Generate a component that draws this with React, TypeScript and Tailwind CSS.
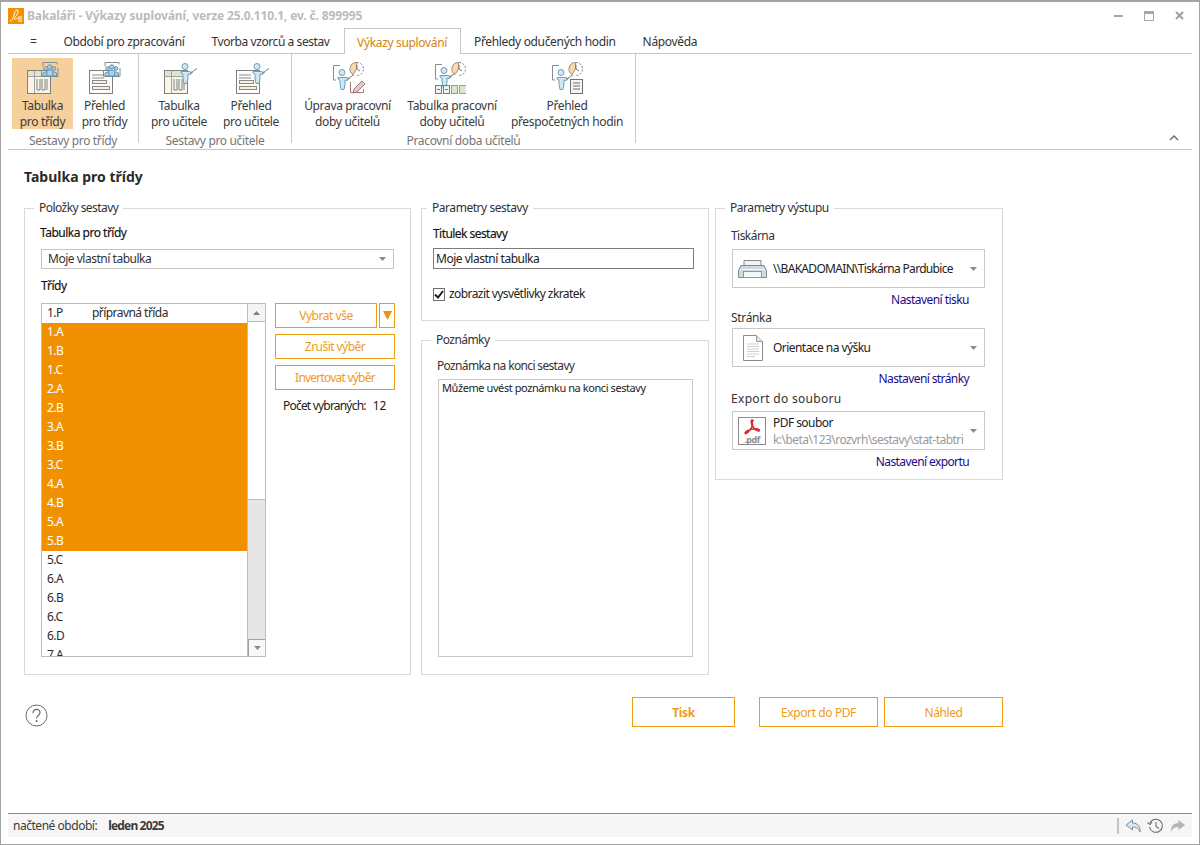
import React from "react";

const F = "[font-family:'Noto_Sans','Open_Sans',sans-serif]";

function People({ x = 0, y = 0 }: { x?: number; y?: number }) {
  return (
    <g transform={`translate(${x} ${y})`}>
      <path d="M2 4.500V.5h14v2M.5 8v6.500H17V6" fill="none" stroke="#8a8a8a" strokeWidth="1" />
      <g fill="#a9d3e8" stroke="#5f94b0" strokeWidth="1">
        <circle cx="4.500" cy="6.500" r="1.800" />
        <circle cx="13" cy="6.500" r="1.800" />
        <path d="M2 14v-3l2-1h1l2 1v3z" />
        <path d="M10.500 14v-3l2-1h1l2 1v3z" />
        <circle cx="8.750" cy="5" r="2.200" />
        <path d="M5.750 14v-5l2-1h2l2 1v5z" />
      </g>
    </g>
  );
}

function Teacher({ x = 0, y = 0 }: { x?: number; y?: number }) {
  return (
    <g transform={`translate(${x} ${y})`}>
      <g fill="#cfe8f4" stroke="#6ba0ba" strokeWidth="1">
        <circle cx="6" cy="3.500" r="3" />
        <path d="M2 8.500h8l3.500 1-2.500 2-2-.5v4l-1 5.500H5l-1-5.500v-4l-2-1z" />
      </g>
      <path d="M11 10.500l7-5" stroke="#7f7f7f" strokeWidth="1" />
    </g>
  );
}

function Clock({ x = 0, y = 0 }: { x?: number; y?: number }) {
  return (
    <g transform={`translate(${x} ${y})`}>
      <path d="M6.500 .5a6.500 6.500 0 0 0-3.500 12L6.500 7z" fill="#f6d9ae" stroke="#a08b72" />
      <path d="M7 .5a6.500 6.500 0 0 1 0 13" fill="none" stroke="#7a7a7a" strokeDasharray="2 1.500" />
      <path d="M7 3v4l3 2" fill="none" stroke="#7a7a7a" />
    </g>
  );
}

function TableIcon({ x = 0, y = 0, w = 24 }: { x?: number; y?: number; w?: number }) {
  return (
    <g transform={`translate(${x} ${y})`}>
      <rect x=".5" y=".5" width={w - 1} height="23" fill="#f8f4ea" stroke="#808080" />
      <rect x="1" y="1" width={w - 2} height="5" fill="#dbe8cc" />
      <rect x="1" y="6" width="6" height="17" fill="#fdf6e6" />
      <path d={`M0 6.500H${w}M7.500 1V23`} stroke="#a0a0a0" fill="none" />
      <path d="M10 9v11h3V9M15 9v11h3V9M20 9v11" fill="none" stroke="#808080" />
    </g>
  );
}

function ReportIcon({ x = 0, y = 0 }: { x?: number; y?: number }) {
  return (
    <g transform={`translate(${x} ${y})`}>
      <rect x=".5" y=".5" width="23" height="23" fill="#fdfdfd" stroke="#808080" />
      <path d="M3 5h12M3 8h12" stroke="#8a8a8a" />
      <rect x="3.500" y="10.500" width="14" height="3" fill="#fdf0d8" stroke="#8a8a8a" />
      <rect x="3.500" y="16.500" width="17" height="3" fill="#fdf0d8" stroke="#8a8a8a" />
    </g>
  );
}

function Frame({ x = 0, y = 0 }: { x?: number; y?: number }) {
  return <path transform={`translate(${x} ${y})`} d="M7 .5H.5V15H3" fill="none" stroke="#8a8a8a" />;
}

const icons: Record<string, React.ReactNode> = {
  tridyT: (
    <>
      <TableIcon x={2} y={8} />
      <People x={16} y={0} />
    </>
  ),
  tridyP: (
    <>
      <ReportIcon x={2} y={8} />
      <People x={16} y={0} />
    </>
  ),
  ucitelT: (
    <>
      <TableIcon x={3} y={8} />
      <Teacher x={18} y={1} />
    </>
  ),
  ucitelP: (
    <>
      <ReportIcon x={3} y={8} />
      <Teacher x={18} y={1} />
    </>
  ),
  uprava: (
    <>
      <Frame x={3} y={3} />
      <Teacher x={6} y={7} />
      <Clock x={20} y={0} />
      <path d="M20.500 20v10.500h13V27" fill="#fff" stroke="#a07878" />
      <path d="M24 27l8-8 3 3-8 8-4 1z" fill="#e8c6c6" stroke="#a07878" />
    </>
  ),
  tabulka: (
    <>
      <Frame x={1} y={2} />
      <Teacher x={4} y={5} />
      <Clock x={18} y={0} />
      <g fill="#f2f2f2" stroke="#7a7a7a">
        <rect x="1.500" y="23.500" width="6" height="8" />
        <rect x="9.500" y="23.500" width="6" height="8" />
      </g>
      <rect x="17.500" y="23.500" width="6" height="8" fill="#dbe8cc" stroke="#8ca878" />
      <path d="M32 23.500h-6.500v8H32" fill="#dbe8cc" stroke="#8ca878" />
      <path d="M3 27.500h3M11 27.500h3" stroke="#7a7a7a" />
    </>
  ),
  prehled: (
    <>
      <Frame x={3} y={3} />
      <Teacher x={6} y={7} />
      <Clock x={20} y={0} />
      <rect x="21.500" y="17.500" width="12" height="14" fill="#f4f4f4" stroke="#707070" />
      <path d="M24 21h7M24 24h7M24 27h7" stroke="#707070" />
    </>
  ),
};

function RibbonButton({ icon, l1, l2, w, active }: { icon: string; l1: string; l2: string; w: string; active?: boolean }) {
  return (
    <div className={`${w} h-[71px] flex flex-col items-center text-center ${active ? "bg-[#f5cf9c]" : ""}`}>
      <svg width="36" height="34" viewBox="0 0 36 34" className="mt-[4px] shrink-0">
        {icons[icon]}
      </svg>
      <div className="mt-[2px] leading-[16px] whitespace-nowrap text-[#3a3a3a]">
        {l1}
        <br />
        {l2}
      </div>
    </div>
  );
}

function RibbonGroup({ label, w, pl, children }: { label: string; w: string; pl: string; children: React.ReactNode }) {
  return (
    <div className={`${w} h-[89px] border-r border-[#c8c8c8] flex flex-col`}>
      <div className={`flex h-[75px] shrink-0 pt-[4px] ${pl}`}>{children}</div>
      <div className="h-[14px] shrink-0 leading-[14px] text-center text-[#767676] whitespace-nowrap mt-[5px]">{label}</div>
    </div>
  );
}

function Group({ title, cls, legendCls, children }: { title: string; cls: string; legendCls: string; children: React.ReactNode }) {
  return (
    <fieldset className={`border border-[#d9d9d9] ${cls}`}>
      <legend className={`px-[5px] leading-[16px] text-[#333] ${legendCls}`}>{title}</legend>
      {children}
    </fieldset>
  );
}

function OButton({ children, cls, bold }: { children: React.ReactNode; cls: string; bold?: boolean }) {
  return (
    <div className={`border border-[#f09a10] text-[#f09a1e] flex items-center justify-center ${bold ? "font-bold" : ""} ${cls}`}>
      {children}
    </div>
  );
}

function Caret() {
  return (
    <svg width="7" height="4" viewBox="0 0 7 4" className="shrink-0">
      <path d="M0 0h7L3.500 4z" fill="#8a8a8a" />
    </svg>
  );
}

const classes = ["1.P", "1.A", "1.B", "1.C", "2.A", "2.B", "3.A", "3.B", "3.C", "4.A", "4.B", "5.A", "5.B", "5.C", "6.A", "6.B", "6.C", "6.D", "7.A"];

function ListBox() {
  return (
    <div className="w-[225px] h-[354px] border border-[#bdbdbd] flex overflow-hidden">
      <div className="w-[205px] h-[352px] overflow-hidden">
        {classes.map((c, i) => {
          const sel = i >= 1 && i <= 12;
          return (
            <div key={c} className={`h-[19px] leading-[18px] pl-[5px] flex shrink-0 ${sel ? "bg-[#f29100] text-white" : "text-[#2c2c2c]"}`}>
              <span className="w-[45px]">{c}</span>
              {i === 0 && <span>přípravná třída</span>}
            </div>
          );
        })}
      </div>
      <div className="w-[18px] border-l border-[#bdbdbd] flex flex-col h-[352px]">
        <div className="h-[18px] border-b border-[#bdbdbd] flex items-center justify-center bg-[#f4f4f4]">
          <svg width="7" height="4" viewBox="0 0 7 4">
            <path d="M0 4h7L3.500 0z" fill="#808080" />
          </svg>
        </div>
        <div className="h-[178px] bg-white border-b border-[#bdbdbd]" />
        <div className="flex-1 bg-[#e6e6e6]" />
        <div className="h-[17px] border-t border-l border-[#a0a0a0] flex items-center justify-center bg-[#f8f8f8]">
          <Caret />
        </div>
      </div>
    </div>
  );
}

function PrinterIcon() {
  return (
    <svg width="30" height="20" viewBox="0 0 30 20" className="shrink-0">
      <path d="M6 8V1.500h17V8" fill="#f2f2f2" stroke="#8a8a8a" />
      <path d="M3 6.500h23l2.500 5v7H.5v-7z" fill="#cfd9df" stroke="#7d8a92" />
      <rect x="5.500" y="12.500" width="18" height="6" fill="#f4f7f8" stroke="#8a9aa3" />
      <path d="M2 10.500h25" stroke="#f2f6f8" />
    </svg>
  );
}

function PageIcon() {
  return (
    <svg width="20" height="26" viewBox="0 0 20 26" className="shrink-0">
      <path d="M.5.5h13l6 6v19H.5z" fill="#fff" stroke="#8c8c8c" />
      <path d="M13.500.5v6h6" fill="#e4e4e4" stroke="#9a9a9a" />
      <path d="M4 9h12M4 11.500h12M4 14h12M4 16.500h12M4 19h12M4 21.500h8" stroke="#cfcfcf" />
    </svg>
  );
}

function PdfIcon() {
  return (
    <div className="w-[28px] h-[28px] border border-[#8c8c8c] flex flex-col items-center shrink-0 bg-white">
      <svg width="18" height="16" viewBox="0 0 18 16" className="mt-[1px]">
        <path d="M9 1c-1.500 0-.5 4 0 5.500S6 13 3 14.500c-1.500 .6-1.500-1.500 2-3s9-2.500 11-1-1.500 2.500-4.500-.5S9 2.500 10 1.500z" fill="none" stroke="#d8262b" strokeWidth="1.500" />
      </svg>
      <span className="text-[9px] leading-[9px] font-bold text-[#8a8a8a]">.pdf</span>
    </div>
  );
}

function Logo() {
  return (
    <svg width="16" height="16" viewBox="0 0 16 16" className="shrink-0">
      <rect width="16" height="16" fill="#f29100" />
      <path d="M2 13c2 0 3-3 4-6s1-5 3-5 1 4-1 6-3 3-1 3 2-1 3-1M10 9h4M10 11h4M10 13h4" fill="none" stroke="#fff" strokeWidth="1" />
    </svg>
  );
}

export default function App() {
  return (
    <div className={`${F} text-[12px] tracking-[-0.336px] w-[1200px] h-[845px] border border-[#a3a3a3] border-t-2 bg-white flex flex-col overflow-hidden text-[#222]`}>
      {/* title bar */}
      <div className="h-[26px] shrink-0 flex items-center pl-[7px] pt-[1px]">
        <Logo />
        <span className="ml-[3px] font-bold text-[#bcbcbc] tracking-[-0.13px]">Bakaláři - Výkazy suplování, verze 25.0.110.1, ev. č. 899995</span>
        <div className="ml-auto flex items-center pr-[15px] gap-[21px]">
          <div className="w-[9px] h-[2px] bg-[#a8a8a8] ml-[1px]" />
          <div className="w-[10px] h-[10px] border border-[#a8a8a8] border-t-[3px]" />
          <svg width="9" height="9" viewBox="0 0 9 9">
            <path d="M1 1l7 7M8 1L1 8" stroke="#a0a0a0" strokeWidth="2" />
          </svg>
        </div>
      </div>

      {/* tabs */}
      <div className="h-[26px] shrink-0 mx-[7px] border-b border-[#c6c6c6] flex items-end pl-[8px]">
        <div className="w-[34px] h-[25px] leading-[28px] pl-[14px] text-[#333]">=</div>
        <div className="px-[13.5px] h-[25px] leading-[28px] text-[#333] whitespace-nowrap">Období pro zpracování</div>
        <div className="pl-[13.5px] pr-[14px] h-[25px] leading-[28px] text-[#333] whitespace-nowrap tracking-[-0.42px]">Tvorba vzorců a sestav</div>
        <div className="relative top-[1px] h-[26px] w-[117px] text-center leading-[28px] border border-b-0 border-[#c6c6c6] bg-white text-[#d9820f] whitespace-nowrap">Výkazy suplování</div>
        {["Přehledy odučených hodin", "Nápověda"].map((t) => (
          <div key={t} className="px-[13.5px] h-[25px] leading-[28px] text-[#333] whitespace-nowrap">{t}</div>
        ))}
      </div>

      {/* ribbon */}
      <div className="h-[96px] shrink-0 mx-[7px] border-b border-[#c6c6c6] flex relative">
        <RibbonGroup label="Sestavy pro třídy" w="w-[131px]" pl="pl-[4px]">
          <RibbonButton icon="tridyT" l1="Tabulka" l2="pro třídy" w="w-[61px]" active />
          <RibbonButton icon="tridyP" l1="Přehled" l2="pro třídy" w="w-[63px]" />
        </RibbonGroup>
        <RibbonGroup label="Sestavy pro učitele" w="w-[153px]" pl="pl-[4px]">
          <RibbonButton icon="ucitelT" l1="Tabulka" l2="pro učitele" w="w-[72px]" />
          <RibbonButton icon="ucitelP" l1="Přehled" l2="pro učitele" w="w-[72px]" />
        </RibbonGroup>
        <RibbonGroup label="Pracovní doba učitelů" w="w-[344px]" pl="pl-[8px]">
          <RibbonButton icon="uprava" l1="Úprava pracovní" l2="doby učitelů" w="w-[95px]" />
          <RibbonButton icon="tabulka" l1="Tabulka pracovní" l2="doby učitelů" w="w-[114px]" />
          <RibbonButton icon="prehled" l1="Přehled" l2="přespočetných hodin" w="w-[116px]" />
        </RibbonGroup>
        <svg width="10" height="6" viewBox="0 0 10 6" className="absolute right-[13px] top-[81px]">
          <path d="M1 5l4-4 4 4" fill="none" stroke="#707070" strokeWidth="1.500" />
        </svg>
      </div>

      {/* content */}
      <div className="flex-1 flex flex-col pl-[23px] tracking-[-0.55px]">
        <h1 className="mt-[18px] h-[18px] leading-[18px] text-[14px] font-bold text-[#2a2a2a] tracking-[0]">Tabulka pro třídy</h1>

        <div className="flex mt-[14px] items-start">
          {/* left */}
          <Group title="Položky sestavy" legendCls="ml-[9px]" cls="w-[387px] h-[475px]">
            <div className="pl-[16px]">
              <div className="leading-[16px] mt-[9px] -ml-[1px] text-[#111] tracking-[-0.5px] [-webkit-text-stroke:0.15px_#111]">Tabulka pro třídy</div>
              <div className="mt-[8px] w-[353px] h-[20px] border border-[#c4c4c4] flex items-center pl-[6px] pr-[7px] justify-between text-[#333] tracking-[-0.48px]">
                <span>Moje vlastní tabulka</span>
                <Caret />
              </div>
              <div className="mt-[9px] leading-[16px] text-[#111] [-webkit-text-stroke:0.15px_#111]">Třídy</div>
              <div className="flex mt-[9px]">
                <ListBox />
                <div className="ml-[9px] w-[120px] flex flex-col">
                  <div className="flex">
                    <OButton cls="w-[102px] h-[25px] tracking-[-0.45px]">Vybrat vše</OButton>
                    <OButton cls="ml-[2px] w-[16px] h-[25px]">
                      <svg width="9" height="9" viewBox="0 0 9 9">
                        <path d="M0 0h9L4.500 9z" fill="#f09010" />
                      </svg>
                    </OButton>
                  </div>
                  <OButton cls="mt-[6px] h-[25px]">Zrušit výběr</OButton>
                  <OButton cls="mt-[6px] h-[25px] tracking-[-0.78px]">Invertovat výběr</OButton>
                  <div className="mt-[8px] ml-[8px] leading-[16px] flex tracking-[-0.8px]">
                    <span>Počet vybraných:</span>
                    <span className="ml-[7px] tracking-[0]">12</span>
                  </div>
                </div>
              </div>
            </div>
          </Group>

          {/* middle */}
          <div className="ml-[10px] w-[288px] flex flex-col">
            <Group title="Parametry sestavy" legendCls="ml-[5px] tracking-[-0.45px]" cls="w-[288px] h-[121px]">
              <div className="pl-[11px]">
                <div className="leading-[16px] mt-[10px] text-[#111] [-webkit-text-stroke:0.15px_#111]">Titulek sestavy</div>
                <div className="mt-[6px] w-[261px] h-[21px] border border-[#7c7c7c] leading-[19px] pl-[2px] tracking-[-0.48px]">Moje vlastní tabulka</div>
                <div className="mt-[17px] flex items-center">
                  <div className="w-[12px] h-[13px] border border-[#707070] flex items-center justify-center">
                    <svg width="10" height="9" viewBox="0 0 10 9">
                      <path d="M1 4.500l3 3 5-6.500" fill="none" stroke="#1f1f1f" strokeWidth="2" />
                    </svg>
                  </div>
                  <span className="ml-[4px] leading-[16px] tracking-[-0.58px]">zobrazit vysvětlivky zkratek</span>
                </div>
              </div>
            </Group>
            <Group title="Poznámky" legendCls="ml-[9px]" cls="w-[288px] h-[343px] mt-[11px]">
              <div className="pl-[15px]">
                <div className="leading-[16px] mt-[10px] text-[#333] tracking-[-0.65px]">Poznámka na konci sestavy</div>
                <div className="mt-[5px] ml-[1px] w-[255px] h-[278px] border border-[#c8c8c8] pl-[3px] leading-[16px] text-[11px] tracking-[-0.42px]">Můžeme uvést poznámku na konci sestavy</div>
              </div>
            </Group>
          </div>

          {/* right */}
          <Group title="Parametry výstupu" legendCls="ml-[9px] tracking-[-0.45px]" cls="ml-[6px] w-[288px] h-[280px]">
            <div className="pl-[15px]">
              <div className="leading-[16px] mt-[12px] text-[#333]">Tiskárna</div>
              <div className="mt-[5px] ml-[1px] w-[253px] h-[39px] border border-[#c8c8c8] flex items-center pl-[5px] pr-[7px]">
                <PrinterIcon />
                <span className="ml-[5px] flex-1 whitespace-nowrap tracking-[-0.69px]">\\BAKADOMAIN\Tiskárna Pardubice</span>
                <Caret />
              </div>
              <div className="mt-[4px] w-[238px] text-right leading-[16px] text-[#1c0b88]">Nastavení tisku</div>
              <div className="mt-[2px] leading-[16px] text-[#333] tracking-[-0.336px]">Stránka</div>
              <div className="mt-[2px] ml-[1px] w-[253px] h-[39px] border border-[#c8c8c8] flex items-center pl-[10px] pr-[7px]">
                <PageIcon />
                <span className="ml-[10px] flex-1">Orientace na výšku</span>
                <Caret />
              </div>
              <div className="mt-[4px] w-[238px] text-right leading-[16px] text-[#1c0b88] tracking-[-0.6px]">Nastavení stránky</div>
              <div className="mt-[4px] leading-[16px] text-[#333] tracking-[0.31px]">Export do souboru</div>
              <div className="mt-[4px] ml-[1px] w-[253px] h-[39px] border border-[#c8c8c8] flex items-center pl-[5px] pr-[7px]">
                <PdfIcon />
                <div className="ml-[7px] flex-1 leading-[17px] overflow-hidden whitespace-nowrap">
                  <div>PDF soubor</div>
                  <div className="text-[#9a9a9a]">k:\beta\123\rozvrh\sestavy\stat-tabtri</div>
                </div>
                <Caret />
              </div>
              <div className="mt-[4px] w-[238px] text-right leading-[16px] text-[#1c0b88] tracking-[-0.6px]">Nastavení exportu</div>
            </div>
          </Group>
        </div>

        {/* bottom actions */}
        <div className="flex items-start mt-[22px] tracking-[-0.4px]">
          <svg width="23" height="23" viewBox="0 0 23 23" className="mt-[7px] ml-[1px]">
            <circle cx="11.500" cy="11.500" r="10.500" fill="none" stroke="#6a6a6a" />
            <path d="M8 9c0-5 7.500-4.500 7 0-.3 2.500-3.500 2.500-3.500 5.500" fill="none" stroke="#6a6a6a" strokeWidth="1.200" />
            <circle cx="11.500" cy="17" r="1" fill="#6a6a6a" />
          </svg>
          <OButton bold cls="ml-[584px] w-[103px] h-[30px] pt-[2px]">Tisk</OButton>
          <OButton cls="ml-[24px] w-[119px] h-[30px] pt-[2px]">Export do PDF</OButton>
          <OButton cls="ml-[6px] w-[119px] h-[30px] pt-[2px]">Náhled</OButton>
        </div>
      </div>

      {/* status bar */}
      <div className="h-[24px] shrink-0 mx-[7px] mb-[7px] bg-[#f6f6f6] border-t border-[#8c8c8c] flex items-center pl-[5px] text-[#3a3a3a] tracking-[-0.47px]">
        <span>načtené období:</span>
        <span className="ml-[11px] font-bold tracking-[-0.84px]">leden 2025</span>
        <div className="ml-auto flex items-center pr-[6px]">
          <div className="w-[2px] h-[16px] bg-[#c4c4c4] mr-[6px]" />
          <svg width="17" height="14" viewBox="0 0 17 14">
            <path d="M7.500 1L1 6l6.500 5V8c3 0 6 1 7.500 5 .5-5-2-9-7.500-9z" fill="#d6e9f4" stroke="#7f8d96" />
          </svg>
          <svg width="17" height="16" viewBox="0 0 17 16" className="ml-[5px]">
            <path d="M3 5a6.500 6.500 0 1 1-.5 4" fill="none" stroke="#6e6e6e" strokeWidth="1.100" />
            <path d="M.5 4.500l2.500 2 2-2.500M9 4v4.500l3 2" fill="none" stroke="#6e6e6e" strokeWidth="1.100" />
          </svg>
          <svg width="17" height="14" viewBox="0 0 17 14" className="ml-[5px]">
            <path d="M9.500 1L16 6l-6.500 5V8c-3 0-6 1-7.500 5-.5-5 2-9 7.500-9z" fill="#b4b4b4" />
          </svg>
        </div>
      </div>
    </div>
  );
}
